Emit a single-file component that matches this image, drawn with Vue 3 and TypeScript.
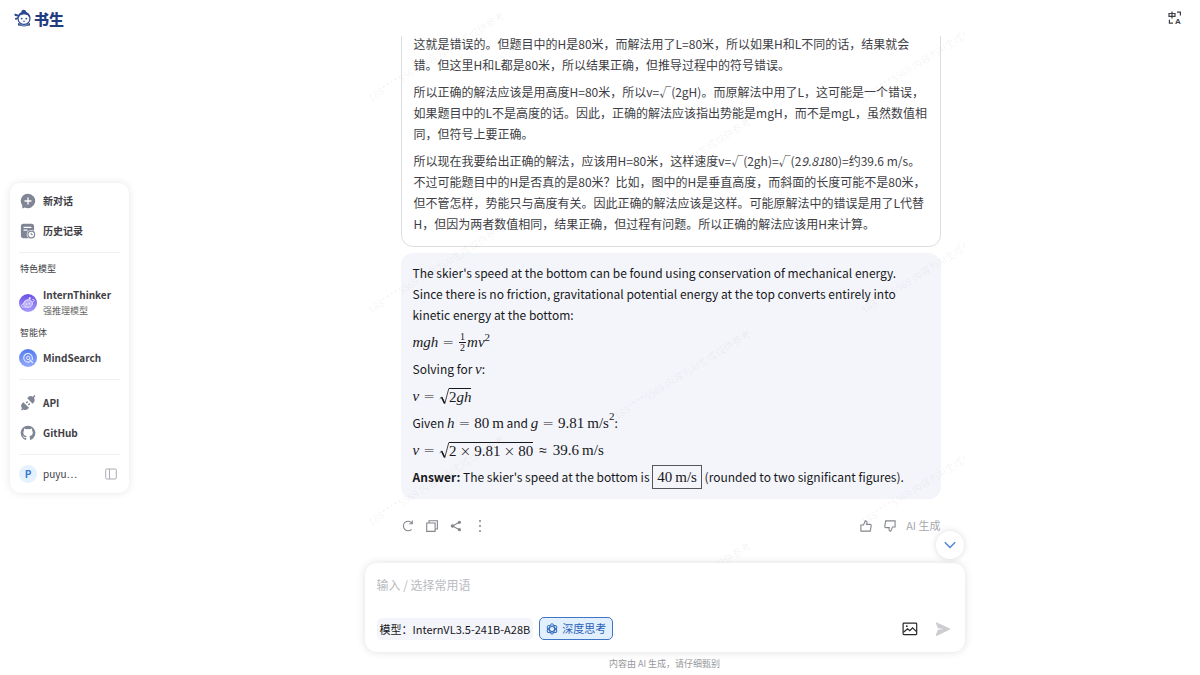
<script setup lang="ts">
import { ref } from 'vue'

const draft = ref('')
const deepThinking = ref(true)
const model = 'InternVL3.5-241B-A28B'

const watermark = '188****5569 内容为AI生成仅供参考'
const marks: { x: number; y: number }[] = []
for (let row = 0; row < 3; row++) {
  marks.push({ x: 6, y: 102 + row * 212 })
  marks.push({ x: 252, y: 208 + row * 212 })
  marks.push({ x: 499, y: 102 + row * 212 })
}
</script>

<template>
  <div class="app">
    <header class="topbar">
      <a class="brand" href="#">
        <svg width="18" height="18" viewBox="0 0 18 18" aria-hidden="true">
          <path d="M7.500 3.600a2.300 2.300 0 1 1 4.400 0z" fill="#2c4a8c" />
          <path d="M.4 4.600 4.600 5.800 4.200 7.600.8 6.900zM.8 9.200l3.200-1 .2 1.600-2.600 1.200z" fill="#2c4a8c" />
          <circle cx="10" cy="9.400" r="6" fill="#fff" stroke="#2c4a8c" stroke-width="1.200" />
          <path d="M4 9c0-4 2.600-6.200 6-6.200S16 5 16 9c-1-.6-1.800-1.700-2.200-2.800L10 5.300 6.200 6.200C5.800 7.300 5 8.400 4 9z" fill="#2c4a8c" />
          <circle cx="7.700" cy="9.600" r=".9" fill="#2c4a8c" />
          <circle cx="12.300" cy="9.600" r=".9" fill="#2c4a8c" />
          <path d="M8.800 12.300h2.400" stroke="#2c4a8c" stroke-width=".8" />
          <path d="M4 14l6 1.600L16 14v2.600l-6 1-6-1z" fill="#2c4a8c" />
          <path d="M5.500 15.700l4.500.8 4.500-.8" fill="none" stroke="#c9d5ee" stroke-width=".6" />
        </svg>
        <span>书生</span>
      </a>
      <button class="icon-btn" aria-label="切换语言">
        <svg width="14" height="14" viewBox="0 0 14 14" aria-hidden="true">
          <g fill="none" stroke="#3c3f45" stroke-width="1.200">
            <path d="M1 2.500h6v2.800H1zM4 .6v6.800" />
            <path d="M9 1.200h3.400v3.200M1.400 8.800v3.400h3.600" />
          </g>
          <text x="7" y="13" class="lang-a">A</text>
        </svg>
      </button>
    </header>

    <aside class="sidebar">
      <nav>
        <a class="item" href="#">
          <svg width="16" height="16" viewBox="0 0 16 16" aria-hidden="true">
            <path d="M8 .8a7.200 7.200 0 1 1-3.100 13.700L2.300 15.600V12.400A7.200 7.200 0 0 1 8 .8z" fill="#7f8594" />
            <path d="M8 5v6M5 8h6" stroke="#fff" stroke-width="1.300" stroke-linecap="round" />
          </svg>
          <b>新对话</b>
        </a>
        <a class="item" href="#">
          <svg width="16" height="16" viewBox="0 0 16 16" aria-hidden="true">
            <path d="M3.500.8h8a2.600 2.600 0 0 1 2.600 2.600v10a1.800 1.800 0 0 1-1.800 1.800H3.500A2.600 2.600 0 0 1 .9 12.600V3.400A2.600 2.600 0 0 1 3.500.8z" fill="#7f8594" />
            <path d="M4 4.300h7M4 7.200h3" stroke="#fff" stroke-width="1.200" stroke-linecap="round" />
            <circle cx="11.300" cy="11.500" r="4.600" fill="#fff" />
            <circle cx="11.300" cy="11.500" r="3.300" fill="#fff" stroke="#7f8594" stroke-width="1.200" />
            <path d="M11.200 9.900v1.800h1.600" fill="none" stroke="#7f8594" />
          </svg>
          <b>历史记录</b>
        </a>
        <hr />
        <h2>特色模型</h2>
        <a class="item model" href="#">
          <svg width="18" height="18" viewBox="0 0 18 18" aria-hidden="true">
            <defs>
              <linearGradient id="thinker" x1="0" y1="0" x2="0" y2="1">
                <stop offset="0" stop-color="#6b4fe6" />
                <stop offset="1" stop-color="#a79cfb" />
              </linearGradient>
            </defs>
            <circle cx="9" cy="9" r="9" fill="url(#thinker)" />
            <path d="M4.600 10.200a4.600 4.600 0 0 1 8.800-1.800c.6 2.800-1.600 5-4.500 5-2.200 0-4-1.200-4.300-3.200z" fill="#b9adfb" stroke="#ece8ff" stroke-width=".9" />
            <path d="M4.400 9.400c-1.600 1.200-2.200 2.300-1.600 3 .6.800 2.400.9 4.400.4M13.600 8.400c1.300-.9 1.900-1.800 1.500-2.400-.3-.5-.9-.6-1.700-.5" fill="none" stroke="#ece8ff" stroke-width=".9" />
            <path d="M7.300 9.400v1.400M10.300 8.900v1.400M10.800 3.200v2M9.800 4.200h2" stroke="#fff" stroke-width=".9" />
          </svg>
          <span class="two-lines"><b>InternThinker</b><small>强推理模型</small></span>
        </a>
        <h2>智能体</h2>
        <a class="item search" href="#">
          <svg class="wide-icon" width="18" height="18" viewBox="0 0 18 18" aria-hidden="true">
            <defs>
              <linearGradient id="search" x1="0" y1="0" x2="0" y2="1">
                <stop offset="0" stop-color="#527af0" />
                <stop offset="1" stop-color="#92a9fa" />
              </linearGradient>
            </defs>
            <circle cx="9" cy="9" r="9" fill="url(#search)" />
            <path d="M13.300 8.800A4.300 4.300 0 1 0 10.900 12.700M11 11l2.600 2.600M13.300 9.200v1.500" fill="none" stroke="#e8edff" stroke-width="1.100" stroke-linecap="round" />
            <circle cx="9.200" cy="8.900" r="1.700" fill="none" stroke="#e8edff" stroke-width="1" />
          </svg>
          <b>MindSearch</b>
        </a>
        <hr />
        <a class="item links" href="#">
          <svg width="16" height="16" viewBox="0 0 16 16" aria-hidden="true">
            <g fill="#7f8594">
              <path d="M3.300 7.200 9 12.800 7.800 14a4 4 0 0 1-4.600.4L2 15.600 1 14.600l1.100-1.200A4 4 0 0 1 2.300 8.200z" />
              <path d="M7.300 3.200 8.200 2.100A4 4 0 0 1 12.800 1.700L14.500 0l1 1-1.600 1.700a4 4 0 0 1-.4 5L12.500 8.700z" />
            </g>
            <path d="M6.200 8l1.500-1.500M8.300 10l1.500-1.500" stroke="#7f8594" stroke-width="1.400" />
          </svg>
          <b>API</b>
        </a>
        <a class="item" href="#">
          <svg width="16" height="16" viewBox="0 0 16 16" aria-hidden="true">
            <path fill="#7f8594" d="M8 .8C3.900.8.7 4 .7 8c0 3.300 2.100 6 5 7 .4.100.5-.2.5-.4v-1.500c-2 .4-2.500-.9-2.500-.9-.3-.8-.8-1.100-.8-1.100-.7-.4 0-.4 0-.4.7 0 1.100.7 1.100.7.700 1.100 1.700.8 2.200.6 0-.5.3-.8.5-1-1.700-.2-3.400-.8-3.400-3.600 0-.8.3-1.500.8-2-.1-.2-.4-1 .1-2 0 0 .6-.2 2 .8a7 7 0 0 1 3.700 0c1.400-1 2-.8 2-.8.5 1 .2 1.800.1 2 .5.5.8 1.200.8 2 0 2.800-1.700 3.400-3.400 3.600.3.200.5.700.5 1.400v2.200c0 .2.100.5.5.4 2.900-1 5-3.700 5-7C15.300 4 12 .8 8 .8z" />
          </svg>
          <b>GitHub</b>
        </a>
        <hr />
      </nav>
      <div class="user">
        <span class="avatar">P</span>
        <span class="name">puyu⋯</span>
        <button class="icon-btn" aria-label="收起侧栏">
          <svg width="12" height="12" viewBox="0 0 12 12" fill="none" stroke="#a9acb3" aria-hidden="true">
            <rect x=".7" y="1" width="10.600" height="10" rx="1.200" />
            <path d="M4.500 1v10" />
          </svg>
        </button>
      </div>
    </aside>

    <main class="main">
      <div class="column">
        <section class="thread">
          <article class="thinking">
            <p>这就是错误的。但题目中的H是80米，而解法用了L=80米，所以如果H和L不同的话，结果就会错。但这里H和L都是80米，所以结果正确，但推导过程中的符号错误。</p>
            <p>所以正确的解法应该是用高度H=80米，所以v=√(2gH)。而原解法中用了L，这可能是一个错误，如果题目中的L不是高度的话。因此，正确的解法应该指出势能是mgH，而不是mgL，虽然数值相同，但符号上要正确。</p>
            <p>所以现在我要给出正确的解法，应该用H=80米，这样速度v=√(2gh)=√(2<em>9.81</em>80)=约39.6 m/s。不过可能题目中的H是否真的是80米？比如，图中的H是垂直高度，而斜面的长度可能不是80米，但不管怎样，势能只与高度有关。因此正确的解法应该是这样。可能原解法中的错误是用了L代替H，但因为两者数值相同，结果正确，但过程有问题。所以正确的解法应该用H来计算。</p>
          </article>

          <article class="answer">
            <p>The skier's speed at the bottom can be found using conservation of mechanical energy. Since there is no friction, gravitational potential energy at the top converts entirely into kinetic energy at the bottom:</p>
            <p><span class="math"><i>mgh</i><span class="rel">=</span><span class="frac"><span>1</span><span>2</span></span><i>mv</i><sup>2</sup></span></p>
            <p>Solving for <span class="math"><i>v</i></span>:</p>
            <p><span class="math"><i>v</i><span class="rel">=</span><span class="root"><svg width="10" height="17" viewBox="0 0 10 17" aria-hidden="true"><path d="M.8 10.600 2.800 9l3 6.500L9.800.5" /><path d="M2.700 9.400l2.900 6" class="heavy" /></svg><span>2<i>gh</i></span></span></span></p>
            <p>Given <span class="math"><i>h</i><span class="rel">=</span>80<span class="thin"></span>m</span> and <span class="math"><i>g</i><span class="rel">=</span>9.81<span class="thin"></span>m/s<sup class="high">2</sup></span>:</p>
            <p><span class="math"><i>v</i><span class="rel">=</span><span class="root"><svg width="10" height="17" viewBox="0 0 10 17" aria-hidden="true"><path d="M.8 10.600 2.800 9l3 6.500L9.800.5" /><path d="M2.700 9.400l2.900 6" class="heavy" /></svg><span>2<span class="rel bin">×</span>9.81<span class="rel bin">×</span>80</span></span><span class="rel approx">≈</span>39.6<span class="thin"></span>m/s</span></p>
            <p><strong>Answer:</strong> The skier's speed at the bottom is <span class="math boxed">40<span class="thin"></span>m/s</span> (rounded to two significant figures).</p>
          </article>

          <div class="actions">
            <button class="icon-btn" aria-label="重新生成">
              <svg width="12" height="12" viewBox="0 0 12 12" aria-hidden="true"><path d="M9.600 9.400A4.800 4.800 0 1 1 9.800 2.800M10.300.6v3.200H7.200" /></svg>
            </button>
            <button class="icon-btn" aria-label="复制">
              <svg width="12" height="12" viewBox="0 0 12 12" aria-hidden="true"><path d="M.7 3h8.400v8.400H.7zM3 3V.7h8.400V9H9.100" /></svg>
            </button>
            <button class="icon-btn" aria-label="分享">
              <svg width="12" height="12" viewBox="0 0 12 12" aria-hidden="true"><path d="M9.300 2.300 2.600 6l6.700 3.700" /><g class="solid"><circle cx="9.400" cy="2.300" r="1.600" /><circle cx="2.500" cy="6" r="1.800" /><circle cx="9.400" cy="9.700" r="1.600" /></g></svg>
            </button>
            <button class="icon-btn" aria-label="更多">
              <svg width="12" height="12" viewBox="0 0 12 12" aria-hidden="true"><g class="solid"><circle cx="6" cy="1" r="1" /><circle cx="6" cy="6" r="1" /><circle cx="6" cy="11" r="1" /></g></svg>
            </button>
            <span class="spacer"></span>
            <button class="icon-btn" aria-label="赞">
              <svg width="12" height="12" viewBox="0 0 12 12" aria-hidden="true"><path d="M.9 5h2.600L5.300.9c1.500 0 1.900 1 1.700 1.900L6.700 4.400h3.500c.8 0 1.100.6 1 1.200l-.9 5.500H.9z" /></svg>
            </button>
            <button class="icon-btn" aria-label="踩">
              <svg width="12" height="12" viewBox="0 0 12 12" aria-hidden="true"><path d="M11.100 7H8.500l-1.800 4.100c-1.500 0-1.900-1-1.700-1.900l.3-1.600H1.800C1 7.600.7 7 .8 6.400L1.700.9h9.400z" /></svg>
            </button>
            <span class="tag">AI 生成</span>
          </div>
        </section>

        <svg class="watermark" aria-hidden="true">
          <text v-for="(m, i) in marks" :key="i" :transform="`translate(${m.x} ${m.y}) rotate(-32)`">{{ watermark }}</text>
        </svg>

        <form class="composer" @submit.prevent>
          <button type="button" class="to-bottom" aria-label="回到底部">
            <svg width="12" height="8" viewBox="0 0 12 8" aria-hidden="true"><path d="M.8 1.200 6 6.400l5.200-5.200" fill="none" stroke="#4a82d8" stroke-width="1.400" /></svg>
          </button>
          <textarea v-model="draft" rows="1" placeholder="输入 / 选择常用语" aria-label="输入"></textarea>
          <div class="tools">
            <button type="button" class="model-pick">模型：{{ model }}</button>
            <button type="button" class="deep" :aria-pressed="deepThinking" @click="deepThinking = !deepThinking">
              <svg width="12" height="12" viewBox="0 0 12 12" fill="none" stroke="#2a62b8" stroke-width=".9" aria-hidden="true">
                <ellipse cx="6" cy="6" rx="2.500" ry="5.300" />
                <ellipse cx="6" cy="6" rx="2.500" ry="5.300" transform="rotate(60 6 6)" />
                <ellipse cx="6" cy="6" rx="2.500" ry="5.300" transform="rotate(120 6 6)" />
              </svg>
              深度思考
            </button>
            <span class="spacer"></span>
            <button type="button" class="icon-btn" aria-label="上传图片">
              <svg width="16" height="14" viewBox="0 0 16 14" fill="none" stroke="#26282c" stroke-width="1.200" aria-hidden="true">
                <rect x="1.100" y="1.200" width="13.600" height="11.400" rx=".8" />
                <path d="M1.500 10.200 5.600 6.800l2.200 1.900L10.600 5.800l3.900 3.800" />
                <circle cx="4.800" cy="4.200" r=".9" fill="#26282c" stroke="none" />
              </svg>
            </button>
            <button class="icon-btn send" aria-label="发送">
              <svg width="16" height="16" viewBox="0 0 16 16" aria-hidden="true"><path d="M1.800 1.400 14.400 7.200c.7.300.7 1.300 0 1.600L2.400 14.800c-.9.400-1.700-.3-1.400-1.200L2.900 8.800 8.600 8 2.900 7.200 1 2.400C.8 1.700 1.200 1.100 1.800 1.400z" fill="#cccdd0" /></svg>
            </button>
          </div>
        </form>
        <p class="notice">内容由 AI 生成，请仔细甄别</p>
      </div>
    </main>
  </div>
</template>

<style>
body {
  margin: 0;
  background: #fff;
}
</style>

<style scoped>
.app {
  height: 100vh;
  display: grid;
  grid-template-columns: auto 1fr;
  grid-template-rows: 36px minmax(0, 1fr);
  font-family: "Noto Sans CJK SC", "Noto Sans", sans-serif;
  font-size: 12px;
  line-height: 21px;
  color: #3e4045;
}
a {
  color: inherit;
  text-decoration: none;
}
button {
  font: inherit;
  border: 0;
  background: none;
  padding: 0;
  cursor: pointer;
}
p {
  margin: 0;
}
svg {
  display: block;
  flex: none;
}
.icon-btn {
  display: flex;
  align-items: center;
  justify-content: center;
}
.spacer {
  flex: 1;
}

.topbar {
  grid-area: 1 / 1 / 2 / 3;
  display: flex;
  align-items: center;
  justify-content: space-between;
  padding: 0 18px 0 14px;
}
.brand {
  display: flex;
  align-items: center;
  gap: 2px;
  color: #1f3d80;
  font-size: 15px;
  font-weight: 900;
}
.lang-a {
  font: bold 8px "Liberation Sans", Arial, sans-serif;
  fill: #3c3f45;
}

.sidebar {
  grid-area: 1 / 1 / 3 / 2;
  align-self: center;
  box-sizing: border-box;
  width: 119px;
  margin-left: 10px;
  padding: 3px 9px 6px;
  border-radius: 10px;
  background: #fff;
  box-shadow: 0 0 8px rgba(0, 0, 0, 0.1);
}
.item {
  display: flex;
  align-items: center;
  gap: 7px;
  height: 30px;
  padding-left: 1px;
  font-size: 10px;
  line-height: 16px;
}
.item.model {
  height: 32px;
  margin: 9px 0 4px;
  padding-left: 0;
  gap: 6px;
}
.item.search {
  margin-top: 1px;
}
.item.links {
  margin-top: 8px;
}
.wide-icon {
  margin: 0 -1px;
}
.two-lines {
  display: flex;
  flex-direction: column;
}
.two-lines small {
  font-size: 9px;
  color: #666;
}
.sidebar hr {
  height: 1px;
  margin: 6px 0;
  border: 0;
  background: #f0f0f2;
}
.sidebar h2 {
  margin: 0;
  padding-left: 1px;
  font-size: 9px;
  font-weight: 400;
  line-height: 19px;
}
.user {
  display: flex;
  align-items: center;
  height: 26px;
  padding-right: 3px;
  font-size: 10px;
}
.avatar {
  width: 18px;
  height: 18px;
  margin-right: 6px;
  border-radius: 50%;
  background: #e4f1fe;
  color: #3b7ad0;
  font-weight: 700;
  line-height: 18px;
  text-align: center;
}
.name {
  flex: 1;
}

.main {
  grid-area: 2 / 2 / 3 / 3;
  display: flex;
  justify-content: center;
  min-height: 0;
}
.column {
  position: relative;
  display: flex;
  flex-direction: column;
  width: 100%;
  max-width: 600px;
}
.thread {
  flex: 1;
  min-height: 0;
  display: flex;
  flex-direction: column;
  justify-content: flex-end;
  gap: 6px;
  padding: 0 24px 27px 36px;
  overflow: hidden;
}
.thinking,
.answer {
  display: flex;
  flex-direction: column;
  gap: 6px;
  border-radius: 12px;
}
.thinking {
  padding: 12px;
  border: 1px solid #dcdde0;
}
.answer {
  padding: 9px 12px 12px;
  background: #f4f5fa;
  color: #17181c;
}

.math {
  font-family: "Liberation Serif", "Times New Roman", serif;
  font-size: 15px;
  line-height: 1;
}
.rel {
  margin: 0 4px;
  font-family: "DejaVu Sans", sans-serif;
  font-size: 14px;
  font-weight: 200;
  line-height: 0;
}
.rel.bin {
  margin: 0 3px;
}
.rel.approx {
  margin: 0 6px;
}
.thin {
  display: inline-block;
  width: 3px;
}
.math sup {
  font-size: 11px;
  line-height: 0;
  vertical-align: 6px;
}
.math .high {
  vertical-align: 8px;
}
.frac {
  display: inline-flex;
  flex-direction: column;
  width: 7px;
  margin: -4px 1px;
  font-size: 10px;
  line-height: 10px;
  text-align: center;
  vertical-align: 7px;
}
.frac span:first-child {
  border-bottom: 1px solid currentColor;
}
.root {
  display: inline-flex;
  margin: -4px 0;
  vertical-align: -4px;
}
.root svg {
  fill: none;
  stroke: currentColor;
  stroke-width: 0.8;
}
.root .heavy {
  stroke-width: 1.5;
}
.root > span {
  border-top: 1px solid currentColor;
  line-height: 17px;
}
.boxed {
  padding: 3px 4px;
  border: 1px solid #55565a;
}

.actions {
  display: flex;
  align-items: center;
  gap: 12px;
  margin-top: 10px;
  padding-left: 1px;
  height: 22px;
}
.actions svg {
  fill: none;
  stroke: #84868c;
  stroke-width: 1.1;
}
.actions .solid {
  fill: #84868c;
  stroke: none;
}
.tag {
  font-size: 11px;
  color: #a6a8ad;
  margin-left: -2px;
}

.watermark {
  position: absolute;
  top: -36px;
  left: 0;
  width: 100%;
  height: 100vh;
  pointer-events: none;
  font-size: 10px;
  fill: rgba(0, 0, 0, 0.06);
}

.composer {
  position: relative;
  display: flex;
  flex-direction: column;
  padding: 11px 12px 12px;
  border-radius: 12px;
  background: #fff;
  box-shadow: 0 0 8px rgba(0, 0, 0, 0.13);
}
.composer textarea {
  display: block;
  height: 21px;
  margin: 0 0 22px;
  padding: 0;
  border: 0;
  outline: 0;
  resize: none;
  background: none;
  color: inherit;
  font: inherit;
}
.composer textarea::placeholder {
  color: #b9bbbf;
  opacity: 1;
}
.tools {
  display: flex;
  align-items: center;
  height: 23px;
  padding-right: 2px;
}
.model-pick {
  height: 22px;
  padding: 0 3px;
  border-radius: 5px;
  background: #f4f5fa;
  color: #17181c;
  font-size: 11px;
  line-height: 22px;
}
.deep {
  display: flex;
  align-items: center;
  gap: 4px;
  height: 23px;
  margin-left: 6px;
  padding: 0 6px;
  border: 1px solid #3f75c4;
  border-radius: 5px;
  background: #e2effd;
  color: #2a62b8;
  font-size: 11px;
  line-height: 21px;
}
.send {
  margin-left: 17px;
}
.to-bottom {
  position: absolute;
  top: -32px;
  right: 1px;
  display: flex;
  align-items: center;
  justify-content: center;
  width: 28px;
  height: 28px;
  border-radius: 50%;
  background: #fff;
  box-shadow: 0 0 6px rgba(0, 0, 0, 0.15);
}
.notice {
  font-size: 9px;
  line-height: 23px;
  text-align: center;
  color: #97999e;
}
</style>
